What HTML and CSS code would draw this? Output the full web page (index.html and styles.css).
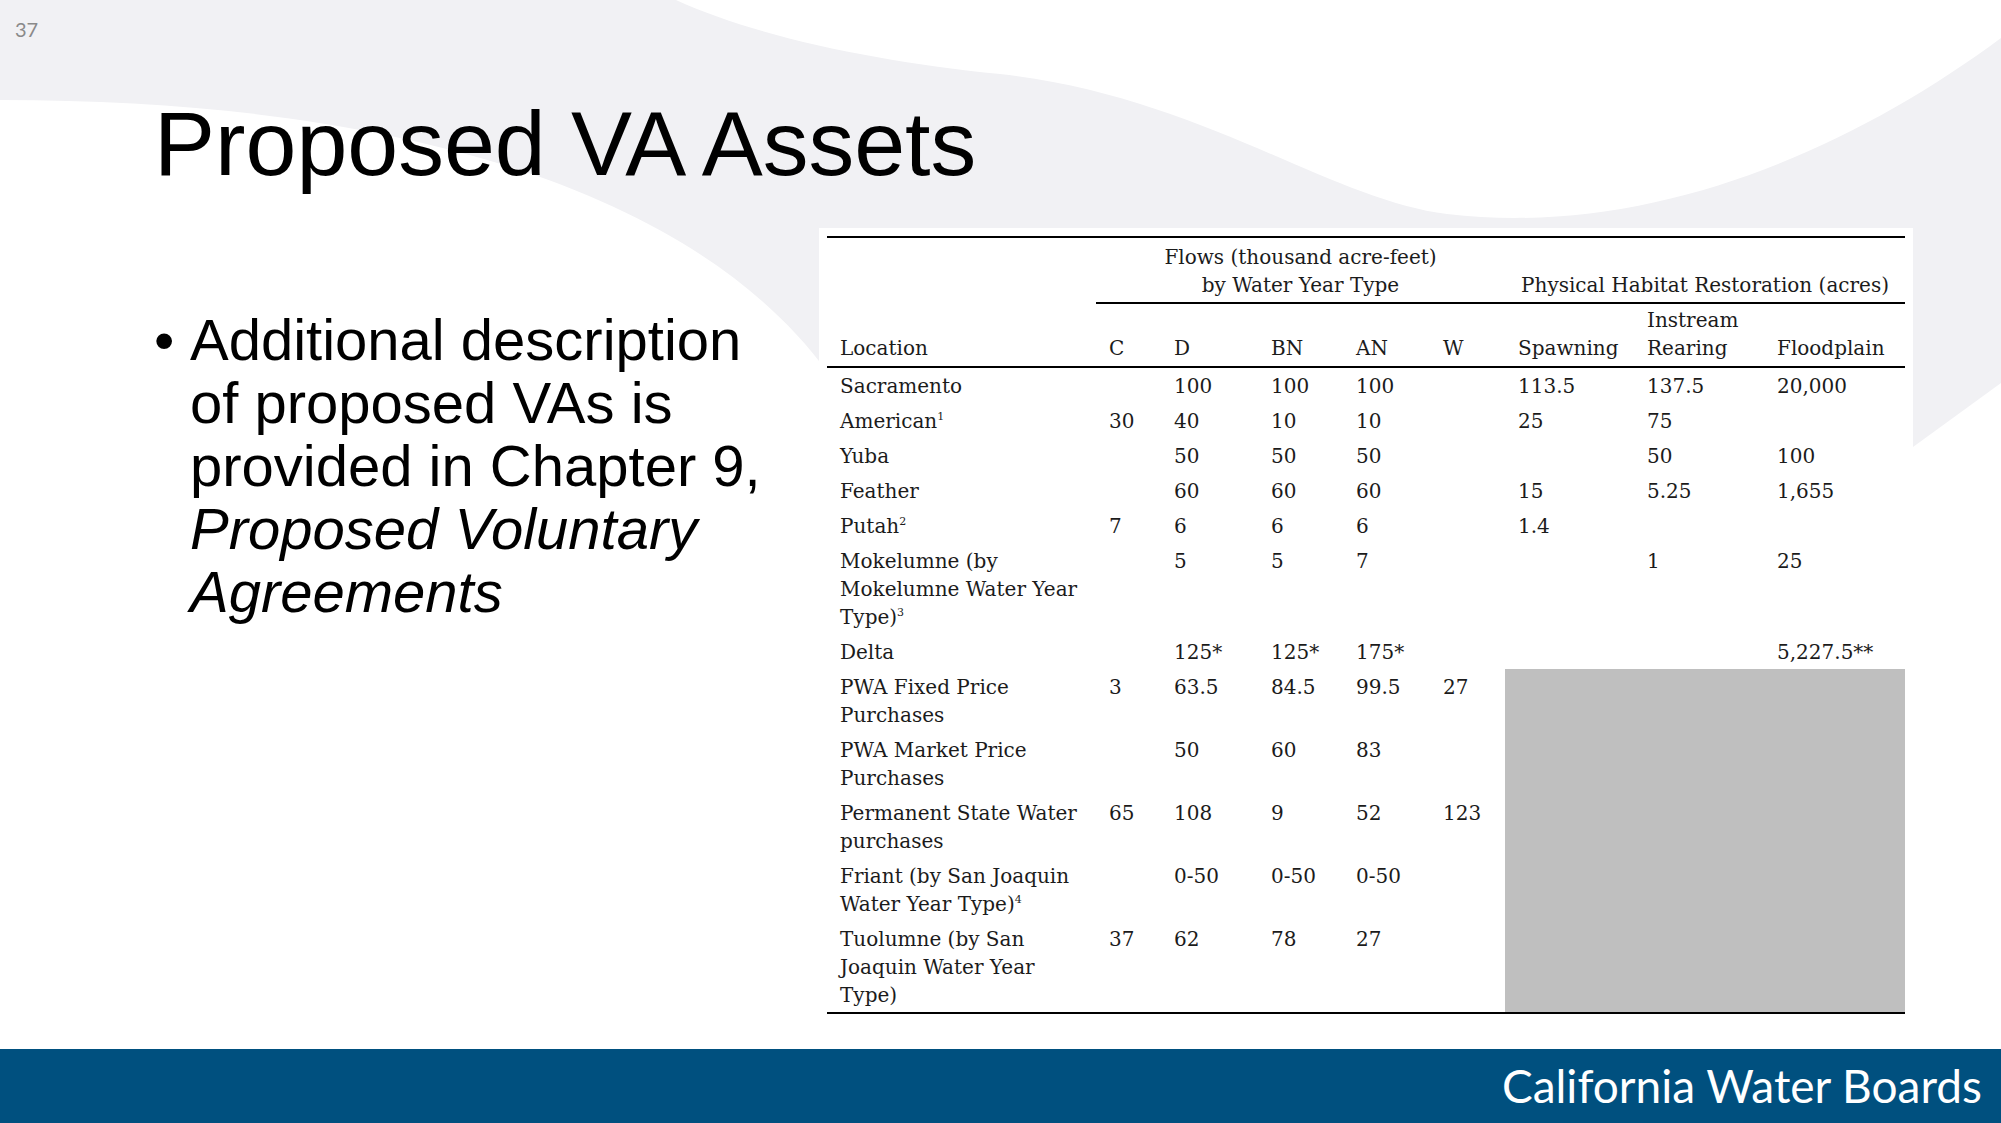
FILE: index.html
```html
<!DOCTYPE html>
<html lang="en">
<head>
<meta charset="utf-8">
<title>Proposed VA Assets</title>
<link rel="stylesheet" href="styles.css">
</head>
<body>
<div class="slide">
  <svg class="bg" viewBox="0 0 2001 1123" width="2001" height="1123" aria-hidden="true">
    <path class="swoosh" d="M0,0 H676 C760,38 880,62 1000,74 C1200,96 1330,200 1447,214 C1650,238 1850,150 2001,38 V383 L1913,447 V228 H826 V370 C700,200 420,100 0,100 Z"/>
  </svg>
  <div class="num">37</div>
  <h1 class="title">Proposed VA Assets</h1>
  <div class="content">
    <div class="bullets">
      <div class="item">
        <span class="dot">•</span>
        <p>Additional description of proposed VAs is provided in Chapter 9, <em>Proposed Voluntary Agreements</em></p>
      </div>
    </div>
    <div class="tablewrap">
      <table class="assets">
        <colgroup>
          <col class="c-loc"><col class="c-c"><col class="c-d"><col class="c-bn"><col class="c-an"><col class="c-w"><col class="c-sp"><col class="c-re"><col class="c-fl">
        </colgroup>
        <thead>
          <tr class="grow">
            <th></th>
            <th class="grp" colspan="5">Flows (thousand acre-feet)<br>by Water Year Type</th>
            <th class="grp" colspan="3">Physical Habitat Restoration (acres)</th>
          </tr>
          <tr class="crow">
            <th>Location</th><th>C</th><th>D</th><th>BN</th><th>AN</th><th>W</th><th>Spawning</th><th>Instream<br>Rearing</th><th>Floodplain</th>
          </tr>
        </thead>
        <tbody>
          <tr><td>Sacramento</td><td></td><td>100</td><td>100</td><td>100</td><td></td><td>113.5</td><td>137.5</td><td>20,000</td></tr>
          <tr><td>American<sup>1</sup></td><td>30</td><td>40</td><td>10</td><td>10</td><td></td><td>25</td><td>75</td><td></td></tr>
          <tr><td>Yuba</td><td></td><td>50</td><td>50</td><td>50</td><td></td><td></td><td>50</td><td>100</td></tr>
          <tr><td>Feather</td><td></td><td>60</td><td>60</td><td>60</td><td></td><td>15</td><td>5.25</td><td>1,655</td></tr>
          <tr><td>Putah<sup>2</sup></td><td>7</td><td>6</td><td>6</td><td>6</td><td></td><td>1.4</td><td></td><td></td></tr>
          <tr><td>Mokelumne (by<br>Mokelumne Water Year<br>Type)<sup>3</sup></td><td></td><td>5</td><td>5</td><td>7</td><td></td><td></td><td>1</td><td>25</td></tr>
          <tr><td>Delta</td><td></td><td>125*</td><td>125*</td><td>175*</td><td></td><td></td><td></td><td>5,227.5**</td></tr>
          <tr><td>PWA Fixed Price<br>Purchases</td><td>3</td><td>63.5</td><td>84.5</td><td>99.5</td><td>27</td><td class="shade" rowspan="5" colspan="3"></td></tr>
          <tr><td>PWA Market Price<br>Purchases</td><td></td><td>50</td><td>60</td><td>83</td><td></td></tr>
          <tr><td>Permanent State Water<br>purchases</td><td>65</td><td>108</td><td>9</td><td>52</td><td>123</td></tr>
          <tr><td>Friant (by San Joaquin<br>Water Year Type)<sup>4</sup></td><td></td><td>0-50</td><td>0-50</td><td>0-50</td><td></td></tr>
          <tr><td>Tuolumne (by San<br>Joaquin Water Year<br>Type)</td><td>37</td><td>62</td><td>78</td><td>27</td><td></td></tr>
        </tbody>
      </table>
    </div>
  </div>
  <footer class="footer">California Water Boards</footer>
</div>
</body>
</html>
```

FILE: styles.css
```css
html, body {
  margin: 0;
  padding: 0;
  background: #ffffff;
}

.slide {
  position: relative;
  isolation: isolate;
  width: 2001px;
  height: 1123px;
  overflow: hidden;
  display: flex;
  flex-direction: column;
  background: #ffffff;
}

.bg {
  position: absolute;
  left: 0;
  top: 0;
  z-index: -1;
}

.swoosh {
  fill: #f1f1f4;
}

.num {
  padding: 17px 0 0 15px;
  font-family: Lato, "Open Sans", sans-serif;
  font-size: 20px;
  line-height: 24px;
  color: #8a8a8a;
}

.title {
  margin: 52px 0 0 154px;
  font-family: "Liberation Sans", Arial, sans-serif;
  font-weight: normal;
  font-size: 91.5px;
  line-height: 101px;
  color: #000000;
}

.content {
  flex: 1;
  display: flex;
  align-items: flex-start;
  margin-top: 34px;
}

.bullets {
  flex: 0 0 819px;
  box-sizing: border-box;
  padding: 80px 0 0 154px;
  font-family: "Liberation Sans", Arial, sans-serif;
  font-size: 58px;
  line-height: 63px;
  color: #000000;
}

.item {
  display: flex;
}

.dot {
  flex: 0 0 36px;
}

.item p {
  margin: 0;
  width: 600px;
}

.item em {
  font-style: italic;
}

.tablewrap {
  background: #ffffff;
  padding: 8px 8px 20px 8px;
}

.assets {
  border-collapse: collapse;
  table-layout: fixed;
  width: 1078px;
  font-family: "DejaVu Serif", "Liberation Serif", serif;
  font-size: 20px;
  line-height: 28px;
  color: #1b1b1b;
  border-top: 2px solid #000000;
  border-bottom: 2px solid #000000;
}

.c-loc { width: 269px; }
.c-c { width: 65px; }
.c-d { width: 97px; }
.c-bn { width: 85px; }
.c-an { width: 87px; }
.c-w { width: 75px; }
.c-sp { width: 129px; }
.c-re { width: 130px; }
.c-fl { width: 141px; }

.assets th,
.assets td {
  padding: 4px 0 3px 13px;
  text-align: left;
  vertical-align: top;
  font-weight: normal;
  white-space: nowrap;
}

.assets .grow th {
  padding: 5px 0 3px 0;
  vertical-align: bottom;
}

.assets .grow th.grp {
  text-align: center;
  border-bottom: 2px solid #000000;
}

.assets .crow th {
  padding: 2px 0 4px 13px;
  vertical-align: bottom;
  border-bottom: 2px solid #000000;
}

.assets td.shade {
  background: #bfbfbf;
  padding: 0;
}

.assets sup {
  font-size: 11px;
  line-height: 0;
  vertical-align: 8px;
}

.footer {
  height: 74px;
  flex: 0 0 74px;
  background: #00507f;
  color: #ffffff;
  text-align: right;
  padding-right: 19px;
  font-family: Lato, "Open Sans", sans-serif;
  font-size: 46px;
  line-height: 74px;
}
```
